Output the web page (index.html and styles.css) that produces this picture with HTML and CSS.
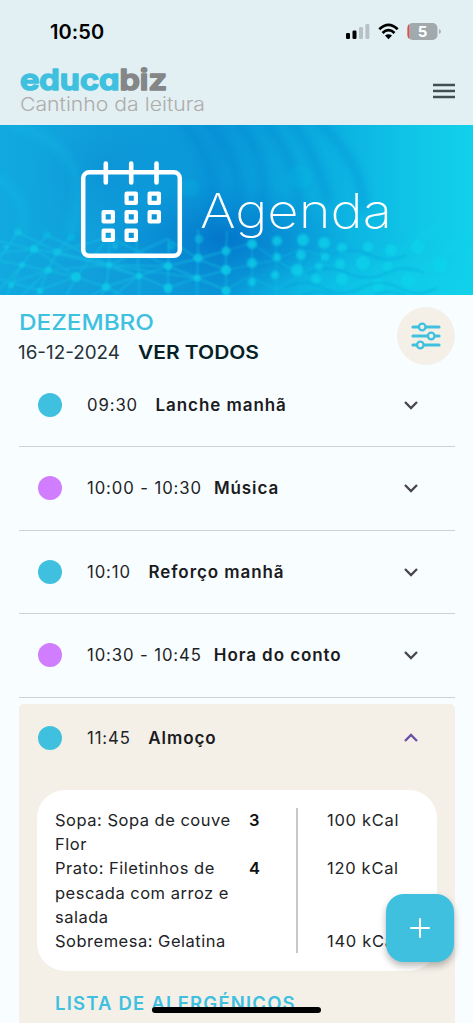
FILE: index.html
```html
<!DOCTYPE html>
<html lang="pt">
<head>
<meta charset="utf-8">
<title>Agenda</title>
<link rel="stylesheet" href="styles.css">
</head>
<body>
<div class="screen">
  <header class="top">
    <div class="status">
      <span class="clock">10:50</span>
      <svg class="status-icons" width="98" height="20" viewBox="0 0 98 20">
        <rect x="1" y="11" width="4" height="6" rx="1.2"/><rect x="7.5" y="8.500" width="4" height="8.500" rx="1.200"/>
        <rect x="14" y="5" width="4" height="12" rx="1.200" fill="#b7c2c6"/><rect x="20.400" y="2" width="4" height="15" rx="1.200" fill="#b7c2c6"/>
        <g fill="none" stroke="#000" stroke-width="2.700"><path d="M34.300 7.200Q43.500-1.600 52.700 7.200"/><path d="M37.500 10.900Q43.500 5.200 49.500 10.900"/></g>
        <path d="M40 13.600Q43.500 10.700 47 13.600L43.500 17.200Z"/>
        <rect x="62.500" y="1" width="30" height="17" rx="5" fill="#a2a9ac"/>
        <path d="M64 2.200Q62.500 3.500 62.500 6v7q0 2.500 1.500 3.800Z" fill="#fb4139"/>
        <path d="M94 7q2 .8 2 2.500T94 12Z" fill="#a9b1b4"/>
        <text x="77.500" y="15" text-anchor="middle" class="battery">5</text>
      </svg>
    </div>
    <div class="brand-row">
      <svg class="brand" width="200" height="52" viewBox="0 0 200 52">
        <text class="wordmark" x="0" y="26" textLength="147" lengthAdjust="spacingAndGlyphs"><tspan class="edu">educa</tspan><tspan class="biz">biz</tspan></text>
        <text class="subtitle" x="0" y="46.500" textLength="185" lengthAdjust="spacingAndGlyphs">Cantinho da leitura</text>
      </svg>
      <svg class="menu" width="22" height="16" viewBox="0 0 22 16"><path d="M0 2h22M0 8h22M0 14h22" stroke="#434e52" stroke-width="2.500"/></svg>
    </div>
  </header>

  <section class="banner">
    <svg width="473" height="170" viewBox="0 0 473 170">
      <defs>
        <linearGradient id="sea"><stop offset="0" stop-color="#11a9df"/><stop offset=".2" stop-color="#109fdb"/><stop offset=".46" stop-color="#0996d8"/><stop offset=".7" stop-color="#0bb0e1"/><stop offset=".88" stop-color="#10c6e7"/><stop offset="1" stop-color="#12d1ea"/></linearGradient>
        <radialGradient id="deep"><stop stop-color="#026bc6" stop-opacity=".75"/><stop offset="1" stop-color="#067fd0" stop-opacity="0"/></radialGradient>
        <radialGradient id="glow"><stop stop-color="#0fd8ec" stop-opacity=".6"/><stop offset="1" stop-color="#0fd8ec" stop-opacity="0"/></radialGradient>
        <filter id="soft" x="-20%" y="-20%" width="140%" height="140%"><feGaussianBlur stdDeviation="4"/></filter>
        <filter id="fine"><feGaussianBlur stdDeviation=".8"/></filter>
        <filter id="dots"><feGaussianBlur stdDeviation="1.800"/></filter>
      </defs>
      <rect width="473" height="170" fill="url(#sea)"/>
      <ellipse cx="225" cy="114" rx="125" ry="58" fill="url(#deep)"/>
      <ellipse cx="105" cy="48" rx="70" ry="60" fill="url(#deep)" opacity=".25"/>
      <ellipse cx="370" cy="180" rx="150" ry="60" fill="url(#glow)"/>
      <g filter="url(#soft)" fill="none" stroke="#067fcf" stroke-width="7" opacity=".36">
        <path d="M180-5q45 45 28 110M205-5q48 50 28 110M237-5q40 50 20 105M263-5q38 42 35 92M290-5q25 30 39 83M316-5q47 40 48 90"/>
      </g>
      <g filter="url(#soft)" fill="none" stroke="#10d6ed" stroke-width="8" opacity=".18">
        <path d="M10 0q90 20 60 110M-10 50q45 20 30 65M365 170q15-40 80-70M405 170q20-35 60-55"/>
      </g>
      <g filter="url(#fine)" fill="none" stroke="#19cce8" stroke-width="1.500" opacity=".48">
        <path d="M-5 140l23-33M-10 175L22 140l12-16 13-14M5 175l6-15 11-20 12-16M22 170l26-25 9-18 14-15M34 175l6-10 8-20M64 175l12-23 33-40M99 175l7-13 3-22V110M139 175v-24l-3-40M168 175v-34l1-27M197 175v-22l1-19V104M226 175v-49l1-20"/>
        <path d="M-5 135l27 5 54 12 30 10 33-11 29-10 30-7 28-8M-5 152l16 6 37-13 61-5 30 11 29 12 29-10 29-8M0 128l34-4 42 28-36 13M-5 115l39 9 75 16 59-26M40 165l-29-7M47 110l62 30 59 1 58 24M57 127l52 13 87 13 30 12M57 127l82 24-33 11-30 18M18 107l39 20 52-15 59 29 58-15M168 141l29 12-29 10-29-12M168 114l30 20 28 11M106 162l40 20M139 151l-33 25"/>
        <path d="M226 126l26-8 24 17 24-11 30 8M226 145l50-10 24 14 22-10 38 10M226 165l24-14 26 14 26-16 21 15 32-16M252 118v55M276 120v55M300 122v52M322 126v45" opacity=".65"/>
      </g>
      <g fill="#10c9e7" filter="url(#fine)" opacity=".9">
        <circle cx="76" cy="152" r="5"/><circle cx="48" cy="145" r="3.500"/><circle cx="22" cy="140" r="3"/><circle cx="34" cy="124" r="4"/><circle cx="57" cy="127" r="4" opacity=".65"/><circle cx="18" cy="107" r="4" opacity=".5"/><circle cx="47" cy="110" r="4" opacity=".4"/><circle cx="71" cy="112" r="4" opacity=".4"/><circle cx="109" cy="140" r="3"/><circle cx="106" cy="162" r="4"/><circle cx="139" cy="151" r="3.200"/><circle cx="168" cy="141" r="4"/><circle cx="168" cy="163" r="4.500"/><circle cx="198" cy="133" r="4.500" opacity=".8"/><circle cx="197" cy="153" r="3.500"/><circle cx="226" cy="126" r="4.500" opacity=".8"/><circle cx="226" cy="145" r="5"/><circle cx="226" cy="166" r="4.500"/><circle cx="11" cy="160" r="3"/><circle cx="40" cy="166" r="3"/><circle cx="115" cy="121" r="3.500" opacity=".5"/><circle cx="171" cy="121" r="4" opacity=".4"/><circle cx="199" cy="114" r="4.500" opacity=".5"/><circle cx="6" cy="122" r="3" opacity=".5"/>
      </g>
      <g fill="#10d3eb" filter="url(#dots)" opacity=".75">
        <circle cx="252" cy="119" r="5"/><circle cx="252" cy="138" r="5"/><circle cx="252" cy="157" r="4"/><circle cx="277" cy="116" r="5"/><circle cx="277" cy="132" r="4"/><circle cx="275" cy="150" r="4"/><circle cx="297" cy="145" r="6"/><circle cx="303" cy="115" r="6"/><circle cx="301" cy="130" r="5"/><circle cx="316" cy="154" r="5"/><circle cx="319" cy="142" r="4"/><circle cx="324" cy="118" r="6"/><circle cx="325" cy="132" r="4"/><circle cx="342" cy="123" r="5"/><circle cx="340" cy="139" r="5"/><circle cx="342" cy="154" r="6"/><circle cx="363" cy="138" r="7"/><circle cx="368" cy="122" r="5"/><circle cx="388" cy="142" r="5"/><circle cx="391" cy="125" r="6"/><circle cx="378" cy="160" r="6"/><circle cx="408" cy="155" r="7"/><circle cx="418" cy="122" r="7"/><circle cx="440" cy="140" r="8"/><circle cx="300" cy="52" r="12" opacity=".2"/><circle cx="190" cy="63" r="9" opacity=".2"/>
      </g>
      <g fill="none" stroke="#078fd3" stroke-width="1.500" opacity=".35" filter="url(#fine)"><path d="M285 163q20-10 38 0t38 0 38 0 38 0M300 172q18-10 36 0t36 0 36 0M308 148q20-9 40 0t38 0 38 0M332 130q20-9 38 0t36 0"/></g>
      <g fill="none" stroke="#fff">
        <rect x="83.200" y="47.300" width="96.600" height="83.500" rx="6" stroke-width="4.500"/>
        <path d="M105.800 38.500v19M131.200 38.500v19M156.500 38.500v19" stroke-width="4.600" stroke-linecap="round"/>
        <g stroke-width="4.200" stroke-linejoin="round"><rect x="126.600" y="68.600" width="9.300" height="9.300"/><rect x="149.600" y="68.600" width="9.300" height="9.300"/><rect x="103.600" y="87.200" width="9.300" height="9.300"/><rect x="126.600" y="87.200" width="9.300" height="9.300"/><rect x="149.600" y="87.200" width="9.300" height="9.300"/><rect x="103.600" y="105.700" width="9.300" height="9.300"/><rect x="126.600" y="105.700" width="9.300" height="9.300"/></g>
      </g>
      <text class="banner-title" x="200" y="102.500" textLength="192" lengthAdjust="spacingAndGlyphs">Agenda</text>
    </svg>
  </section>

  <main class="content">
    <div class="dates">
      <div>
        <svg class="date-text" width="250" height="56" viewBox="0 0 250 56">
          <text class="month" x="0" y="20" textLength="135" lengthAdjust="spacingAndGlyphs">DEZEMBRO</text>
          <text class="day" x="-1" y="49" textLength="102" lengthAdjust="spacingAndGlyphs">16-12-2024</text>
          <text class="all" x="119" y="49" textLength="121" lengthAdjust="spacingAndGlyphs">VER TODOS</text>
        </svg>
      </div>
      <div class="filter">
        <svg width="30" height="28" viewBox="0 0 30 28"><g fill="#f4f0e8" stroke="#40c0df" stroke-width="3.200" stroke-linecap="round"><path d="M2 5h26M2 14h26M2 23h26"/><g stroke-width="2.300"><circle cx="11.200" cy="5" r="3.300"/><circle cx="20.200" cy="14" r="3.300"/><circle cx="9.300" cy="23" r="3.300"/></g></g></svg>
      </div>
    </div>

    <div class="row"><i class="dot"></i><span class="time">09:30</span><b class="gap-wide">Lanche manhã</b><svg class="chev" viewBox="0 0 16 10"><path d="M2 2l6 6 6-6"/></svg></div>
    <div class="row"><i class="dot violet"></i><span class="time">10:00 - 10:30</span><b>Música</b><svg class="chev" viewBox="0 0 16 10"><path d="M2 2l6 6 6-6"/></svg></div>
    <div class="row"><i class="dot"></i><span class="time">10:10</span><b class="gap-wide">Reforço manhã</b><svg class="chev" viewBox="0 0 16 10"><path d="M2 2l6 6 6-6"/></svg></div>
    <div class="row"><i class="dot violet"></i><span class="time">10:30 - 10:45</span><b>Hora do conto</b><svg class="chev" viewBox="0 0 16 10"><path d="M2 2l6 6 6-6"/></svg></div>

    <div class="panel">
      <div class="row open"><i class="dot"></i><span class="time">11:45</span><b class="gap-wide">Almoço</b><svg class="chev up" viewBox="0 0 16 10"><path d="M2 8l6-6 6 6"/></svg></div>
      <div class="card">
        <div class="meals">
          <p>Sopa: Sopa de couve<br>Flor</p><b>3</b>
          <p>Prato: Filetinhos de<br>pescada com arroz e<br>salada</p><b>4</b>
          <p>Sobremesa: Gelatina</p>
        </div>
        <div class="energy"><span>100 kCal</span><span>120 kCal</span><span>140 kCal</span></div>
      </div>
      <div class="allergens">LISTA DE ALERGÉNICOS</div>
    </div>
  </main>
  <div class="fab"><svg width="20" height="20" viewBox="0 0 20 20"><path d="M10 1v18M1 10h18" stroke="#fff" stroke-width="2" stroke-linecap="round"/></svg></div>
  <div class="home"></div>
</div>
</body>
</html>
```
FILE: styles.css
```css
* { box-sizing: border-box; }
body { margin: 0; font-family: Inter, "Liberation Sans", sans-serif; color: #222326; }
svg { display: block; flex: none; }
.screen { position: relative; width: 473px; height: 1024px; overflow: hidden; background: #f8fdff; border-bottom: 1px solid #fff; }
.top { height: 125px; background: #e2f0f4; display: flex; flex-direction: column; }
.status { height: 64px; padding: 0 30px 0 50px; display: flex; align-items: center; justify-content: space-between; }
.clock { font-size: 20px; font-weight: 600; color: #000; letter-spacing: .1px; }
.status-icons { margin-bottom: 1px; }
.battery { font: 700 15px Inter, sans-serif; fill: #fff; }
.brand-row { padding: 0 18px 0 20px; display: flex; justify-content: space-between; align-items: flex-start; }
.brand { overflow: visible; }
.menu { margin-top: 19px; }
.wordmark { font: 600 29px Inter, sans-serif; font-feature-settings: "cv11"; stroke-width: 1.700px; stroke-linejoin: round; }
.edu { fill: #40c0df; stroke: #40c0df; }
.biz { fill: #858688; stroke: #858688; }
.subtitle { font: 300 18.500px Inter, sans-serif; fill: #afabaa; }
.banner { height: 170px; }
.banner-title { font: 200 47.500px Inter, sans-serif; fill: #fff; }
.content { padding: 0 18px 0 19px; }
.dates { height: 68.500px; padding-top: 12px; display: flex; justify-content: space-between; }
.date-text { margin-top: 3px; overflow: visible; }
.month { font: 500 22px Inter, sans-serif; fill: #40c0df; }
.day { font: 400 18.500px Inter, sans-serif; fill: #263238; }
.all { font: 600 18.500px Inter, sans-serif; fill: #071f27; }
.filter { width: 58px; height: 58px; border-radius: 50%; background: #f4f0e8; display: flex; align-items: center; justify-content: center; }
.row { height: 83.500px; padding: 0 36px 0 19px; display: flex; align-items: center; border-bottom: 1px solid #cfd2d4; font-size: 17px; }
.dot { width: 24px; height: 24px; margin-right: 25px; border-radius: 50%; background: #40c0df; flex: none; }
.violet { background: #d17dff; }
.time { font-size: 16.700px; letter-spacing: .9px; white-space: nowrap; }
.row b { margin-left: 12px; font-weight: 600; letter-spacing: .93px; color: #1b1b1e; }
.row .gap-wide { margin-left: 17.500px; }
.chev { width: 16px; height: 10px; margin-left: auto; fill: none; stroke: #49454f; stroke-width: 2.300; }
.up { stroke: #674fa5; }
.panel { height: 330px; margin-top: 6.500px; padding: 0 18px; background: #f4f0e8; border-radius: 5px 5px 0 0; }
.open { height: 67.500px; padding: 0 18px 0 1px; border: 0; }
.card { height: 181px; margin-top: 18.500px; padding: 18px; display: flex; background: #fff; border-radius: 28px; font-size: 16.500px; line-height: 24.200px; letter-spacing: .5px; }
.meals { width: 243px; display: grid; grid-template-columns: 194px 1fr; align-content: start; border-right: 2px solid #cac7c6; white-space: nowrap; }
.meals p { margin: 0; }
.meals b { font-weight: 600; color: #111; }
.energy { padding-left: 29px; display: grid; grid-template-rows: 48.400px 72.600px 24.200px; letter-spacing: .7px; white-space: nowrap; }
.allergens { margin: 20px 0 0 18px; font-size: 18.500px; line-height: 24px; font-weight: 600; letter-spacing: 1.200px; color: #40c0df; white-space: nowrap; }
.fab { position: absolute; left: 385.500px; top: 894px; width: 68px; height: 68px; border-radius: 18px; background: #40c0df; box-shadow: 0 4px 7px rgba(0,0,0,.28); display: flex; align-items: center; justify-content: center; }
.home { position: absolute; left: 152px; top: 1007px; width: 169px; height: 6px; border-radius: 3px; background: #000; }
```
